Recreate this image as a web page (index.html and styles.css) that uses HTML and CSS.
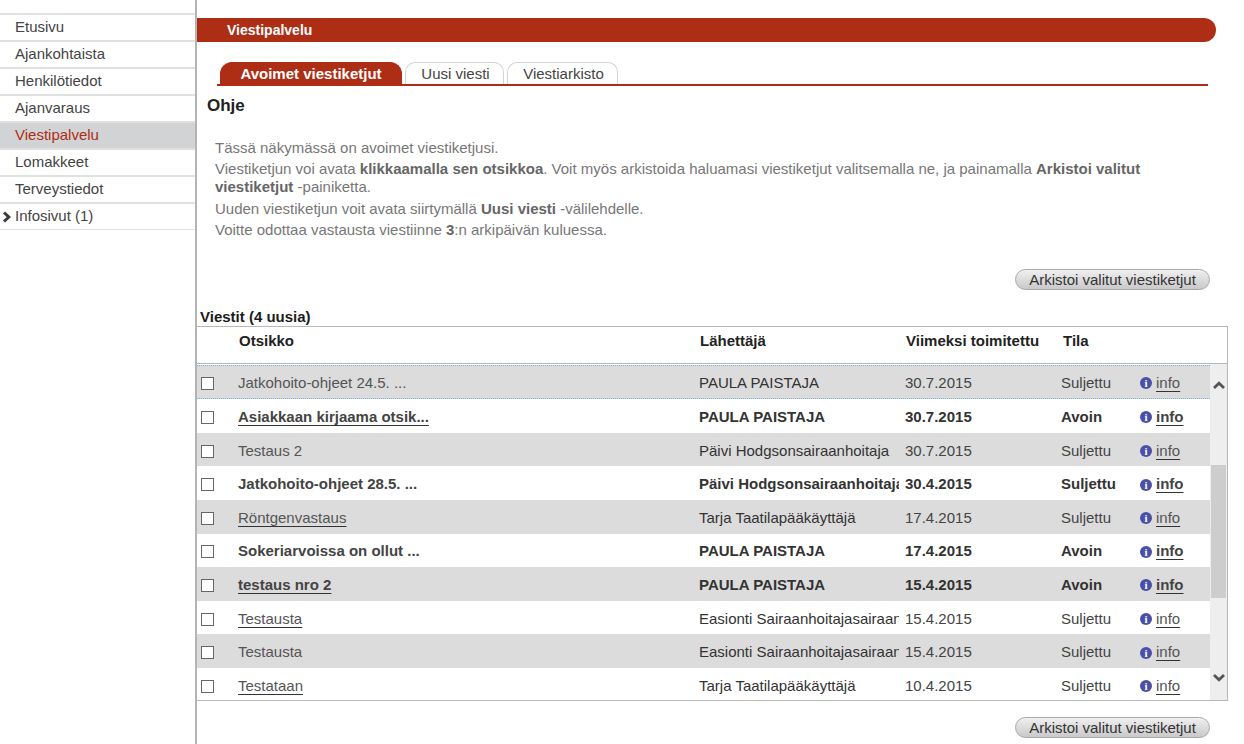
FILE: index.html
```html
<!DOCTYPE html>
<html lang="fi">
<head>
    <meta charset="UTF-8">
    <link rel="stylesheet" href="styles.css">
    <title>Viestipalvelu</title>
</head>
<body>
<div class="page">
    <div class="sideMenu">
        <a class="menuItem">Etusivu</a>
        <a class="menuItem">Ajankohtaista</a>
        <a class="menuItem">Henkilötiedot</a>
        <a class="menuItem">Ajanvaraus</a>
        <a class="menuItem menuActive">Viestipalvelu</a>
        <a class="menuItem">Lomakkeet</a>
        <a class="menuItem">Terveystiedot</a>
        <a class="menuItem">
            <svg class="menuArrow" width="10" height="12" viewBox="0 0 10 12"><path d="M2 1.5 L6.8 6 L2 10.5" fill="none" stroke="#3a3a3a" stroke-width="3"/></svg>
            Infosivut (1)
        </a>
    </div>
    <div class="content">
        <div class="titleBar">Viestipalvelu</div>
        <div class="tabs">
            <a class="tab tabActive">Avoimet viestiketjut</a>
            <a class="tab tabNew">Uusi viesti</a>
            <a class="tab tabArchive">Viestiarkisto</a>
        </div>
        <h2 class="helpTitle">Ohje</h2>
        <div class="helpText">
            <p>Tässä näkymässä on avoimet viestiketjusi.</p>
            <p>Viestiketjun voi avata <b>klikkaamalla sen otsikkoa</b>. Voit myös arkistoida haluamasi viestiketjut valitsemalla ne, ja painamalla <b>Arkistoi valitut viestiketjut</b> -painiketta.</p>
            <p>Uuden viestiketjun voit avata siirtymällä <b>Uusi viesti</b> -välilehdelle.</p>
            <p>Voitte odottaa vastausta viestiinne <b>3</b>:n arkipäivän kuluessa.</p>
        </div>
        <div class="buttonRow buttonRowTop"><button class="archiveButton">Arkistoi valitut viestiketjut</button></div>
        <div class="listTitle">Viestit (4 uusia)</div>
        <div class="listBox">
            <div class="listHead">
                <span class="headTitle">Otsikko</span>
                <span class="headSender">Lähettäjä</span>
                <span class="headDate">Viimeksi toimitettu</span>
                <span class="headState">Tila</span>
            </div>
            <div class="listBody">
                <div class="rows">
                    <div class="row grey first"><span class="check"></span><span class="subject">Jatkohoito-ohjeet 24.5. ...</span><span class="sender">PAULA PAISTAJA</span><span>30.7.2015</span><span>Suljettu</span><span class="infoCell"><i class="infoIcon">i</i><a>info</a></span></div>
                    <div class="row unread"><span class="check"></span><a class="subject">Asiakkaan kirjaama otsik...</a><span class="sender">PAULA PAISTAJA</span><span>30.7.2015</span><span>Avoin</span><span class="infoCell"><i class="infoIcon">i</i><a>info</a></span></div>
                    <div class="row grey"><span class="check"></span><span class="subject">Testaus 2</span><span class="sender">Päivi Hodgsonsairaanhoitaja</span><span>30.7.2015</span><span>Suljettu</span><span class="infoCell"><i class="infoIcon">i</i><a>info</a></span></div>
                    <div class="row unread"><span class="check"></span><span class="subject">Jatkohoito-ohjeet 28.5. ...</span><span class="sender">Päivi Hodgsonsairaanhoitaja</span><span>30.4.2015</span><span>Suljettu</span><span class="infoCell"><i class="infoIcon">i</i><a>info</a></span></div>
                    <div class="row grey"><span class="check"></span><a class="subject">Röntgenvastaus</a><span class="sender">Tarja Taatilapääkäyttäjä</span><span>17.4.2015</span><span>Suljettu</span><span class="infoCell"><i class="infoIcon">i</i><a>info</a></span></div>
                    <div class="row unread"><span class="check"></span><span class="subject">Sokeriarvoissa on ollut ...</span><span class="sender">PAULA PAISTAJA</span><span>17.4.2015</span><span>Avoin</span><span class="infoCell"><i class="infoIcon">i</i><a>info</a></span></div>
                    <div class="row grey unread"><span class="check"></span><a class="subject">testaus nro 2</a><span class="sender">PAULA PAISTAJA</span><span>15.4.2015</span><span>Avoin</span><span class="infoCell"><i class="infoIcon">i</i><a>info</a></span></div>
                    <div class="row"><span class="check"></span><a class="subject">Testausta</a><span class="sender">Easionti Sairaanhoitajasairaanhoitaja</span><span>15.4.2015</span><span>Suljettu</span><span class="infoCell"><i class="infoIcon">i</i><a>info</a></span></div>
                    <div class="row grey"><span class="check"></span><span class="subject">Testausta</span><span class="sender">Easionti Sairaanhoitajasairaanhoitaja</span><span>15.4.2015</span><span>Suljettu</span><span class="infoCell"><i class="infoIcon">i</i><a>info</a></span></div>
                    <div class="row"><span class="check"></span><a class="subject">Testataan</a><span class="sender">Tarja Taatilapääkäyttäjä</span><span>10.4.2015</span><span>Suljettu</span><span class="infoCell"><i class="infoIcon">i</i><a>info</a></span></div>
                </div>
                <div class="scrollBar">
                    <svg class="scrollUp" width="16" height="10" viewBox="0 0 16 10"><path d="M3 8 L8 3.2 L13 8" fill="none" stroke="#555" stroke-width="2.8"/></svg>
                    <div class="scrollThumb"></div>
                    <svg class="scrollDown" width="16" height="10" viewBox="0 0 16 10"><path d="M3 2 L8 6.8 L13 2" fill="none" stroke="#555" stroke-width="2.8"/></svg>
                </div>
            </div>
        </div>
        <div class="buttonRow buttonRowBottom"><button class="archiveButton">Arkistoi valitut viestiketjut</button></div>
    </div>
</div>
</body>
</html>
```

FILE: styles.css
```css
html, body {
    margin: 0;
    padding: 0;
    background: #fff;
}

body {
    font-family: "Liberation Sans", Arial, sans-serif;
    font-size: 15px;
    color: #333;
    overflow: hidden;
}

.page {
    display: flex;
    width: 1244px;
    height: 744px;
}

.sideMenu {
    flex: none;
    width: 197px;
    height: 744px;
    padding-top: 13px;
    box-sizing: border-box;
    border-right: 2px solid #b4b4b4;
}

.menuItem {
    display: flex;
    align-items: center;
    height: 27px;
    box-sizing: border-box;
    padding: 0 0 2px 15px;
    border-top: 2px solid #e1e1e1;
    color: #444;
    position: relative;
}

.menuItem:last-child {
    border-bottom: 1px solid #e1e1e1;
    height: 28px;
}

.menuActive {
    background: #d2d3d5;
    color: #ae2d15;
}

.menuArrow {
    position: absolute;
    left: 2px;
    top: 7px;
}

.content {
    flex: 1;
    min-width: 0;
}

.titleBar {
    margin-top: 18px;
    margin-right: 28px;
    height: 24px;
    line-height: 24px;
    padding-left: 30px;
    background: #ae2d15;
    color: #fff;
    font-size: 14px;
    font-weight: bold;
    border-radius: 0 12px 12px 0;
}

.tabs {
    display: flex;
    margin: 20px 36px 0 20px;
    height: 24px;
    box-sizing: border-box;
    padding-left: 3px;
    border-bottom: 2px solid #ae2d15;
}

.tab {
    height: 22px;
    line-height: 22px;
    box-sizing: border-box;
    text-align: center;
    border: 1px solid #d4d4d4;
    border-bottom: none;
    border-radius: 10px 10px 0 0;
    margin-right: 3px;
    color: #444;
}

.tabActive {
    width: 182px;
    background: #ae2d15;
    border-color: #ae2d15;
    color: #fff;
    font-weight: bold;
    border-radius: 12px 12px 0 0;
}

.tabNew {
    width: 99px;
    padding-left: 2px;
}

.tabArchive {
    width: 111px;
    padding-left: 2px;
}

.helpTitle {
    margin: 10px 0 0 10px;
    font-size: 17px;
    line-height: 20px;
    color: #222;
}

.helpText {
    margin: 23px 60px 0 18px;
    color: #777;
    line-height: 18px;
}

.helpText p {
    margin: 0 0 3.4px;
}

.helpText b {
    color: #666;
}

.buttonRow {
    display: flex;
    justify-content: flex-end;
    padding-right: 34px;
}

.buttonRowTop {
    margin-top: 29.4px;
}

.buttonRowBottom {
    margin-top: 16px;
}

.archiveButton {
    width: 195px;
    height: 21px;
    padding: 0;
    font-family: inherit;
    font-size: 15px;
    line-height: 19px;
    color: #333;
    border: 1px solid #a8a8a8;
    border-radius: 11px;
    background: linear-gradient(#f0f0f0, #c9c9c9);
}

.listTitle {
    margin: 19px 0 0 3px;
    height: 16px;
    line-height: 16px;
    font-weight: bold;
    color: #1c1c1c;
}

.listBox {
    width: 1031px;
    box-sizing: border-box;
    margin-top: 1px;
    border: 1px solid #b8b8b8;
    border-left: none;
}

.listHead {
    display: grid;
    grid-template-columns: 42px 461px 206px 157px 1fr;
    height: 37px;
    box-sizing: border-box;
    padding-top: 5px;
    border-bottom: 1px solid #b8b8b8;
    font-weight: bold;
    color: #222;
}

.headTitle {
    grid-column: 2;
}

.listBody {
    display: flex;
    height: 336px;
    overflow: hidden;
}

.rows {
    flex: 1;
    min-width: 0;
    padding-top: 1px;
}

.row {
    display: grid;
    grid-template-columns: 41px 461px 206px 156px 79px 70px;
    align-items: center;
    height: 33.6px;
    box-sizing: border-box;
    padding-top: 1px;
    white-space: nowrap;
    color: #444;
}

.first {
    height: 34.6px;
    border-top: 1px dotted #7fa9d3;
    border-bottom: 1px dotted #7fa9d3;
}

.grey {
    background: #dcdcdc;
}

.unread {
    font-weight: bold;
    color: #333;
}

.check {
    display: block;
    width: 11px;
    height: 11px;
    margin: 2px 0 0 4px;
    border: 1px solid #666;
    background: #fff;
}

.subject {
    color: #555;
}

.unread .subject {
    color: #444;
}

a.subject, .infoCell a {
    text-decoration: underline;
    text-underline-offset: 3px;
    text-decoration-color: #333;
    color: #555;
}

.unread a.subject, .unread .infoCell a {
    color: #444;
}

.sender {
    overflow: hidden;
    margin-right: 6px;
    color: #333;
}

.infoCell {
    display: flex;
    align-items: center;
    gap: 4px;
}

.infoIcon {
    display: block;
    width: 12px;
    height: 12px;
    margin-top: 2px;
    border-radius: 50%;
    background: #4a50a8;
    color: #fff;
    font: bold 11px/12px "Liberation Serif", serif;
    text-align: center;
}

.scrollBar {
    width: 17px;
    flex: none;
    display: flex;
    flex-direction: column;
    background: #eee;
}

.scrollUp {
    flex: none;
    margin: 16px 0 0 1px;
}

.scrollThumb {
    flex: none;
    width: 15px;
    height: 133px;
    margin: 75px 0 0 1px;
    background: #cdcdcd;
}

.scrollDown {
    flex: none;
    margin: 75px 0 0 1px;
}
```
